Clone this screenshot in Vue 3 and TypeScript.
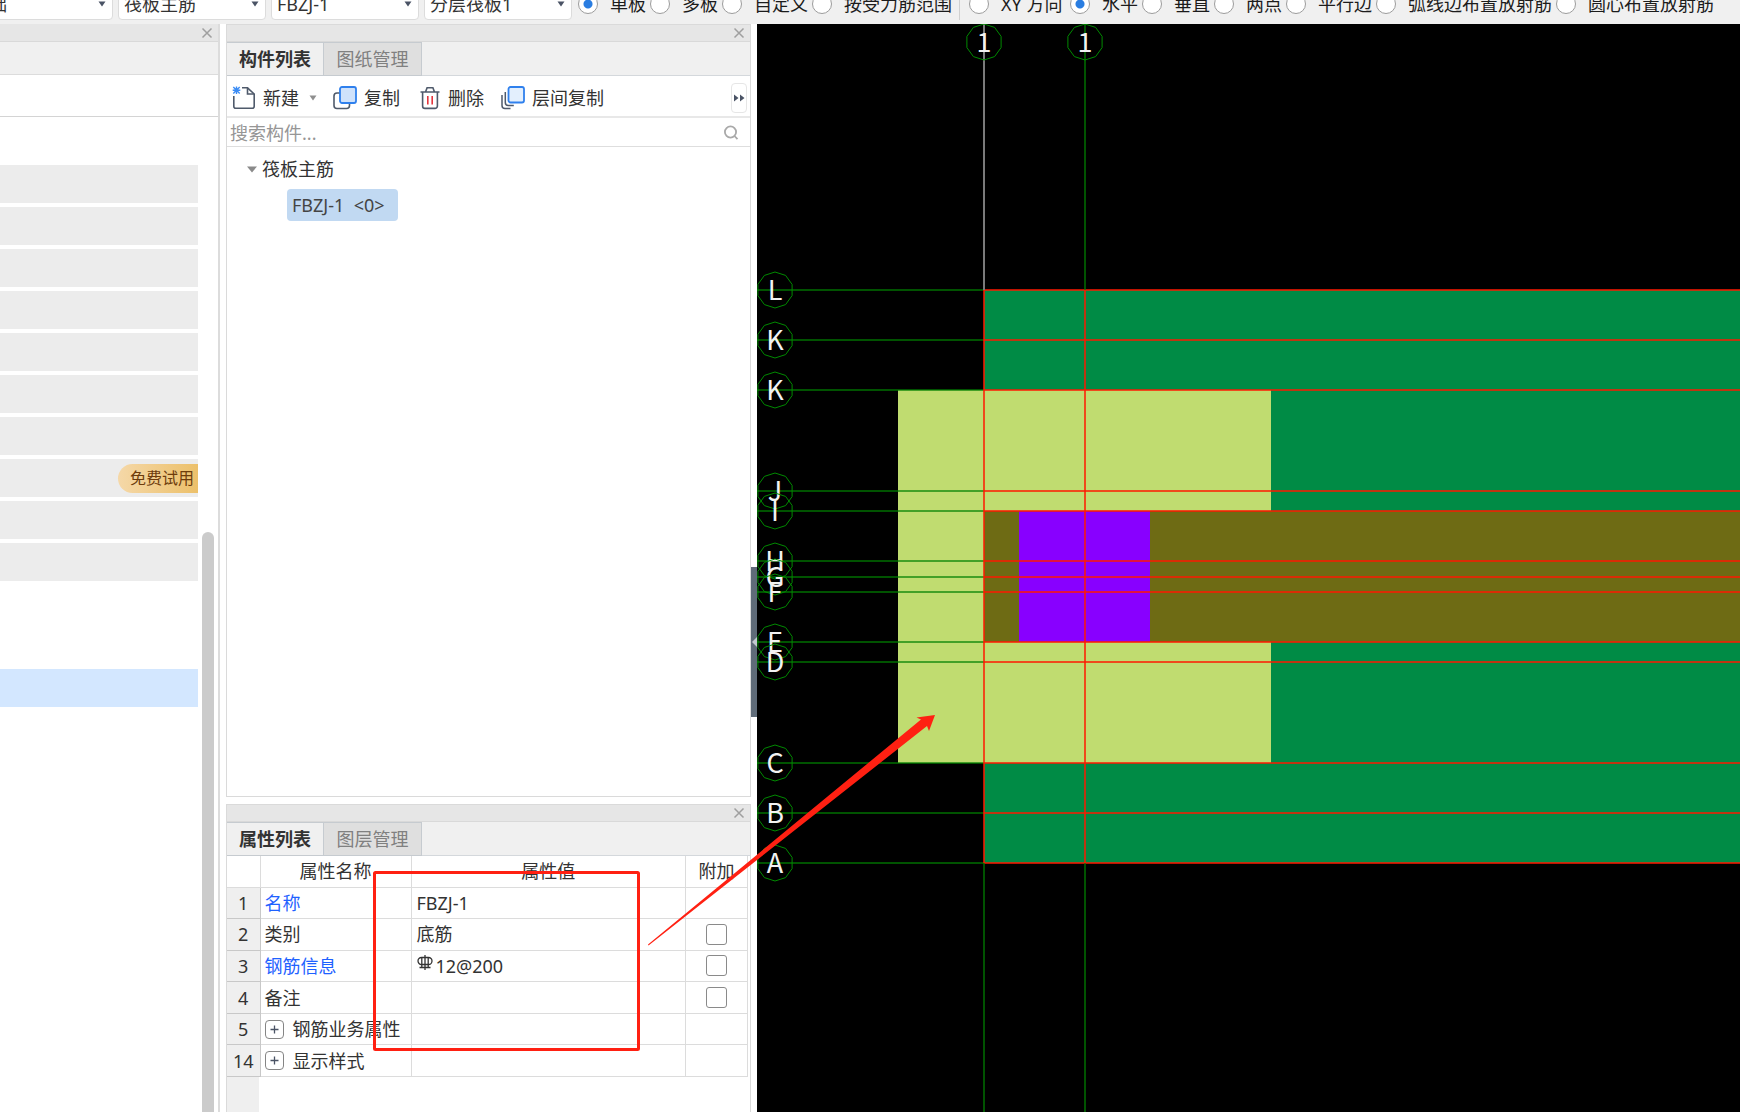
<script setup lang="ts">
import { ref } from 'vue'

interface Drop { id: string; label: string; value: string }
interface Choice { group: string; label: string }
interface Row { no: number; name: string; value?: string; key?: boolean; rebar?: boolean; check?: boolean; group?: boolean }
interface Axis { label: string; y: number }

const drops: Drop[] = [
  { id: 'floor', label: '楼层', value: '基础' },
  { id: 'kind', label: '构件类型', value: '筏板主筋' },
  { id: 'member', label: '构件', value: 'FBZJ-1' },
  { id: 'layer', label: '分层', value: '分层筏板1' },
]
const ranges: Choice[] = ['单板', '多板', '自定义', '按受力筋范围'].map(label => ({ group: 'range', label }))
const directions: Choice[] = ['XY 方向', '水平', '垂直', '两点', '平行边', '弧线边布置放射筋', '圆心布置放射筋'].map(label => ({ group: 'dir', label }))
const range = ref('单板')
const direction = ref('水平')
const keyword = ref('')

const navRows = ['item', 'item', 'item', 'item', 'item', 'item', 'item', 'trial', 'item', 'item', 'blank', 'blank', 'active']

const rows: Row[] = [
  { no: 1, name: '名称', value: 'FBZJ-1', key: true },
  { no: 2, name: '类别', value: '底筋', check: true },
  { no: 3, name: '钢筋信息', value: '12@200', key: true, rebar: true, check: true },
  { no: 4, name: '备注', check: true },
  { no: 5, name: '钢筋业务属性', group: true },
  { no: 14, name: '显示样式', group: true },
]

const axes: Axis[] = [
  { label: 'L', y: 266 }, { label: 'K', y: 316 }, { label: 'K', y: 366 },
  { label: 'J', y: 467 }, { label: 'I', y: 487 }, { label: 'H', y: 537 },
  { label: 'G', y: 553 }, { label: 'F', y: 568 }, { label: 'E', y: 618 },
  { label: 'D', y: 638 }, { label: 'C', y: 739 }, { label: 'B', y: 789 }, { label: 'A', y: 839 },
]
const columns = [{ x: 227, first: true }, { x: 328, first: false }]

function bubble(cx: number, cy: number): string {
  const pts: string[] = []
  for (let i = 0; i < 10; i++) {
    const a = (Math.PI * 2 * i) / 10 - Math.PI / 2
    pts.push(`${(cx + 18 * Math.cos(a)).toFixed(1)},${(cy + 18 * Math.sin(a)).toFixed(1)}`)
  }
  return pts.join(' ')
}
</script>

<template>
  <div class="app">
    <header class="options">
      <div v-for="d in drops" :key="d.id" class="drop">
        <select :aria-label="d.label"><option>{{ d.value }}</option></select>
        <svg class="drop-caret" width="8" height="6" viewBox="0 0 8 6"><path d="M0.5 0.5h7L4 5.5z" fill="#4a5365" /></svg>
      </div>
      <div class="choices">
        <label v-for="c in ranges" :key="c.label" class="choice">
          <input v-model="range" type="radio" :name="c.group" :value="c.label"><span>{{ c.label }}</span>
        </label>
      </div>
      <div class="choices second">
        <label v-for="c in directions" :key="c.label" class="choice">
          <input v-model="direction" type="radio" :name="c.group" :value="c.label"><span>{{ c.label }}</span>
        </label>
      </div>
    </header>

    <main class="work">
      <aside class="nav">
        <div class="titlebar">
          <button class="close" aria-label="关闭"><svg width="12" height="12" viewBox="0 0 12 12"><path d="M1.5 1.5l9 9M10.5 1.5l-9 9" /></svg></button>
        </div>
        <div class="nav-strip"></div>
        <div class="nav-head"></div>
        <div class="nav-body">
          <div class="nav-rows">
            <div v-for="(r, i) in navRows" :key="i" class="nav-row" :class="r">
              <a v-if="r === 'trial'" href="#" class="trial">免费试用</a>
            </div>
          </div>
          <div class="nav-thumb"></div>
        </div>
      </aside>

      <div class="docks">
        <section class="panel members">
          <div class="titlebar">
            <button class="close" aria-label="关闭"><svg width="12" height="12" viewBox="0 0 12 12"><path d="M1.5 1.5l9 9M10.5 1.5l-9 9" /></svg></button>
          </div>
          <div class="tabs">
            <button class="tab on">构件列表</button><button class="tab">图纸管理</button>
          </div>
          <div class="tools">
            <button class="tool new">
              <svg width="24" height="24" viewBox="0 0 24 24" fill="none">
                <path d="M1.8 10v10.2a2 2 0 0 0 2 2h16.4a2 2 0 0 0 2-2V8L15.5 1.8H10" stroke="#4f5a6b" stroke-width="1.6" />
                <path d="M15.5 1.8V8h6.7" stroke="#4f5a6b" stroke-width="1.6" />
                <path d="M4.5 0.5v7.6M0.7 4.3h7.6M1.3 1.1l6.4 6.4M7.7 1.1L1.3 7.5" stroke="#3b8cf5" stroke-width="1.4" />
              </svg>
              <span>新建</span>
              <svg class="more" width="8" height="6" viewBox="0 0 8 6"><path d="M0.5 0.5h7L4 5.5z" fill="#8f8f8f" /></svg>
            </button>
            <button class="tool copy">
              <svg width="24" height="24" viewBox="0 0 24 24" fill="none">
                <path d="M7 7H4a3 3 0 0 0-3 3v9.5a3 3 0 0 0 3 3h9.500a3 3 0 0 0 3-3V17" stroke="#4f5a6b" stroke-width="1.6" />
                <rect x="7" y="1" width="16" height="16" rx="2" fill="#cfe2fb" stroke="#2f80ed" stroke-width="1.8" />
              </svg>
              <span>复制</span>
            </button>
            <button class="tool del">
              <svg width="20" height="24" viewBox="0 0 20 24" fill="none">
                <path d="M0.500 6h19M5.500 6l1.600-4.200h5.800L14.500 6M2.600 6v14a2.400 2.400 0 0 0 2.400 2.400h10a2.400 2.400 0 0 0 2.400-2.400V6" stroke="#4f5a6b" stroke-width="1.6" />
                <path d="M7.800 10v8.500M12.200 10v8.500" stroke="#e5343d" stroke-width="1.6" />
              </svg>
              <span>删除</span>
            </button>
            <button class="tool layers">
              <svg width="24" height="24" viewBox="0 0 24 24" fill="none">
                <path d="M1 9v10.500a3 3 0 0 0 3 3h5.500M4.300 6v10.500a3 3 0 0 0 3 3h5.500" stroke="#4f5a6b" stroke-width="1.5" />
                <rect x="7.500" y="1" width="15.500" height="15.500" rx="2" fill="#e3effd" stroke="#2f80ed" stroke-width="1.8" />
              </svg>
              <span>层间复制</span>
            </button>
            <button class="overflow" aria-label="更多">
              <svg width="12" height="8" viewBox="0 0 12 8"><path d="M1 0.500l4.500 3.500L1 7.500zM7 0.500L11.500 4 7 7.500z" fill="#4a5365" /></svg>
            </button>
          </div>
          <div class="search">
            <input v-model="keyword" type="text" aria-label="搜索构件" placeholder="搜索构件...">
            <svg width="16" height="16" viewBox="0 0 16 16" fill="none" stroke="#a9a9a9" stroke-width="1.800"><circle cx="7.500" cy="7" r="5.600" /><path d="M11.500 11l3 3.200" /></svg>
          </div>
          <div class="tree">
            <div class="branch">
              <svg width="10" height="7" viewBox="0 0 10 7"><path d="M0 0.500h10L5 6.500z" fill="#8a8a8a" /></svg>
              <span>筏板主筋</span>
            </div>
            <button class="leaf">FBZJ-1&nbsp; &lt;0&gt;</button>
          </div>
        </section>

        <section class="panel props">
          <div class="titlebar">
            <button class="close" aria-label="关闭"><svg width="12" height="12" viewBox="0 0 12 12"><path d="M1.500 1.500l9 9M10.500 1.500l-9 9" /></svg></button>
          </div>
          <div class="tabs">
            <button class="tab on">属性列表</button><button class="tab">图层管理</button>
          </div>
          <div class="sheet">
            <table>
              <colgroup><col class="c-no"><col class="c-name"><col class="c-value"><col class="c-extra"></colgroup>
              <thead>
                <tr><th class="corner"></th><th>属性名称</th><th>属性值</th><th>附加</th></tr>
              </thead>
              <tbody>
                <tr v-for="r in rows" :key="r.no">
                  <th class="no" scope="row">{{ r.no }}</th>
                  <td :class="{ key: r.key }">
                    <span class="cell">
                      <button v-if="r.group" class="expand" :aria-label="'展开' + r.name">
                        <svg width="9" height="9" viewBox="0 0 9 9"><path d="M4.500 0.500v8M0.500 4.500h8" stroke="#4a5365" stroke-width="1.300" /></svg>
                      </button>{{ r.name }}
                    </span>
                  </td>
                  <td>
                    <span class="cell value">
                      <svg v-if="r.rebar" class="rebar" width="16" height="16" viewBox="0 0 16 16" fill="none" stroke="#333" stroke-width="1.300"><path d="M8 0v15M4.800 2.500v10M11.200 2.500v10M2.500 12.500h11" /><path d="M4.500 2.500h7a3.500 3.500 0 0 1 0 7h-7a3.500 3.500 0 0 1 0-7z" /></svg>{{ r.value }}
                    </span>
                  </td>
                  <td class="tick"><input v-if="r.check" type="checkbox" :aria-label="'附加' + r.name"></td>
                </tr>
              </tbody>
            </table>
          </div>
        </section>
      </div>

      <div class="splitter">
        <button class="grip" aria-label="折叠面板"><svg width="5" height="10" viewBox="0 0 5 10"><path d="M5 0v10L0 5z" fill="#c3c9d0" /></svg></button>
      </div>

      <div class="canvas">
        <svg class="drawing" width="100%" height="100%">
          <rect x="227" y="266" width="100%" height="573" fill="#008b45" />
          <rect x="141" y="366" width="373" height="373" fill="#c0dc70" />
          <rect x="227" y="487" width="100%" height="131" fill="#6e6b14" />
          <rect x="262" y="487" width="131" height="131" fill="#8800ff" />
          <g v-for="(a, i) in axes" :key="'h' + i">
            <line x1="0" :y1="a.y" x2="227" :y2="a.y" class="axis" />
            <line x1="227" :y1="a.y" x2="100%" :y2="a.y" class="edge" />
          </g>
          <g v-for="c in columns" :key="'v' + c.x">
            <line :x1="c.x" y1="0" :x2="c.x" y2="266" :class="c.first ? 'picked' : 'axis'" />
            <line :x1="c.x" y1="266" :x2="c.x" y2="839" class="edge" />
            <line :x1="c.x" y1="839" :x2="c.x" y2="100%" class="axis" />
          </g>
          <g v-for="(a, i) in axes" :key="'b' + i">
            <polygon :points="bubble(18, a.y)" class="ring" />
            <text x="18" :y="a.y + 10" class="mark">{{ a.label }}</text>
          </g>
          <g v-for="c in columns" :key="'c' + c.x">
            <polygon :points="bubble(c.x, 18)" class="ring" />
            <text :x="c.x" y="28" class="mark">1</text>
          </g>
        </svg>
      </div>
    </main>

    <svg class="notes" width="100%" height="100%">
      <rect x="374.500" y="872.500" width="264" height="177" rx="1" fill="none" stroke="#ff2012" stroke-width="3" />
      <path d="M648 944.500L921 719.500L916.500 717.500L935 715L929 731L927 726L648.500 945.500z" fill="#ff2012" />
    </svg>
  </div>
</template>

<style>
body { margin: 0; background: #fff; }
</style>

<style scoped>
.app {
  position: relative;
  display: flex;
  flex-direction: column;
  min-height: 100vh;
  overflow: hidden;
  background: #fff;
  color: #333;
  font: 18px/24px "Noto Sans", "Noto Sans CJK SC", sans-serif;
}
.app * { box-sizing: border-box; }
button, input, select { font: inherit; color: inherit; margin: 0; }
button { padding: 0; border: 0; background: none; white-space: nowrap; }
svg { display: block; flex: none; }

.options {
  display: flex;
  align-items: flex-end;
  gap: 5px;
  height: 24px;
  padding-bottom: 4px;
  margin-left: -35px;
  background: #f0f0f0;
  overflow: hidden;
}
.drop { position: relative; flex: none; width: 148px; }
.drop select {
  display: block;
  appearance: none;
  width: 100%;
  height: 32px;
  padding: 0 24px 0 5px;
  border: 1px solid #dcdcdc;
  border-radius: 4px;
  background: #fff;
}
.drop-caret { position: absolute; right: 7px; top: 13px; }
.choices { display: flex; flex: none; gap: 4px; height: 32px; padding-left: 1px; color: #1c1c1c; }
.second { margin-left: 2px; padding-left: 9px; border-left: 1px solid #d0d0d0; }
.choice { display: flex; align-items: center; gap: 12px; white-space: nowrap; }
.second .choice:first-child { min-width: 97px; }
.choice input {
  appearance: none;
  width: 20px;
  height: 20px;
  border: 1px solid #9c9c9c;
  border-radius: 50%;
  background: #fff;
}
.choice input:checked { background: radial-gradient(circle, #2a7de1 4px, #fff 5px); }

.work { display: flex; flex: 1; }
.titlebar {
  display: flex;
  align-items: center;
  justify-content: flex-end;
  height: 18px;
  padding-right: 5px;
  background: #e6e6e6;
  border-bottom: 1px solid #d9d9d9;
}
.close { display: block; }
.close svg { stroke: #9f9f9f; stroke-width: 1.5; }

.nav { display: flex; flex-direction: column; flex: none; width: 220px; border-right: 2px solid #dcdcdc; }
.nav-strip { height: 33px; background: #f0f0f0; border-bottom: 1px solid #dcdcdc; }
.nav-head { height: 42px; border-bottom: 1px solid #d4d4d4; }
.nav-body { display: flex; flex: 1; gap: 4px; }
.nav-rows { display: flex; flex-direction: column; gap: 4px; width: 198px; padding-top: 48px; }
.nav-row { display: flex; align-items: center; justify-content: flex-end; height: 38px; overflow: hidden; }
.item, .trial { background: #ececec; }
.active { background: #d3e7ff; }
a.trial {
  width: 80px;
  height: 29px;
  padding-left: 12px;
  border-radius: 15px 0 0 15px;
  background: linear-gradient(90deg, #f5d8a8, #ecc06a);
  color: #6d3c0c;
  font-size: 16px;
  line-height: 29px;
  text-decoration: none;
  white-space: nowrap;
}
.nav-thumb { width: 12px; margin-top: 415px; border-radius: 6px 6px 0 0; background: #cbcbcb; }

.docks { display: flex; flex-direction: column; flex: none; gap: 7px; width: 525px; margin-left: 6px; }
.panel { border: 1px solid #dadada; border-top: 0; }
.members { display: flex; flex-direction: column; flex: 1; }
.tabs { display: flex; height: 34px; background: #f0f0f0; border-bottom: 1px solid #d4d8dc; }
.tab { width: 98px; height: 34px; border: 1px solid #c6cbd0; border-left-width: 0; background: #dfdfdf; color: #808080; }
.tab.on { width: 97px; background: #f0f0f0; color: #333; font-weight: 700; }

.tools { display: flex; align-items: center; height: 42px; padding: 3px 3px 0 5px; border-bottom: 2px solid #e8e8e8; }
.tool { display: flex; align-items: center; gap: 7px; }
.more { margin-left: 3px; }
.copy { margin-left: 16px; }
.del { margin-left: 20px; gap: 8px; }
.layers { margin-left: 17px; }
.overflow {
  display: flex;
  align-items: center;
  justify-content: center;
  width: 16px;
  height: 30px;
  margin-left: auto;
  border: 1px solid #e6e6e6;
  border-radius: 4px;
}
.search { display: flex; align-items: center; height: 29px; padding: 1px 11px 0 3px; border-bottom: 1px solid #dedede; }
.search input { flex: 1; min-width: 0; height: 26px; padding: 0; border: 0; outline: 0; background: none; }
.search input::placeholder { color: #969696; opacity: 1; }
.tree { display: flex; flex-direction: column; align-items: flex-start; gap: 8px; padding: 10px 0 0 20px; }
.branch { display: flex; align-items: center; gap: 5px; }
.leaf { min-width: 111px; height: 32px; margin-left: 40px; padding: 0 5px; border-radius: 4px; background: #c1d9f2; color: #444; text-align: left; }

.props { flex: none; border-bottom: 0; }
.props .titlebar, .members .titlebar { border-top: 1px solid #dadada; }
.sheet { min-height: 256px; padding-right: 2px; background: linear-gradient(90deg, #efefef 32px, #fff 32px); }
table { width: 100%; height: 221px; table-layout: fixed; border-collapse: collapse; background: #fff; }
.c-no { width: 33px; }
.c-name { width: 151px; }
.c-extra { width: 62px; }
th, td { height: 31px; padding: 0; border-right: 1px solid #dcdcdc; border-bottom: 1px solid #dcdcdc; font-weight: 400; }
.corner { background: #fff; }
.no { background: #efefef; border-color: #c8c8c8; }
.key { color: #1f62ff; }
.cell { display: flex; align-items: center; padding-left: 4px; white-space: nowrap; }
.value { padding-left: 5px; }
.expand {
  display: flex;
  align-items: center;
  justify-content: center;
  width: 19px;
  height: 19px;
  margin-right: 9px;
  border: 1px solid #858585;
  border-radius: 4px;
}
.rebar { margin-right: 3px; margin-bottom: 5px; }
.tick input {
  appearance: none;
  display: block;
  width: 21px;
  height: 21px;
  margin: 0 auto;
  border: 1px solid #8a8a8a;
  border-radius: 3px;
  background: #fff;
}

.splitter { flex: none; width: 6px; padding-top: 543px; }
.grip { display: flex; align-items: center; justify-content: flex-end; width: 6px; height: 150px; background: #5f6b78; }

.canvas { position: relative; flex: 1; min-width: 0; background: #000; }
.drawing { position: absolute; inset: 0; }
.axis { stroke: #008000; stroke-opacity: 0.65; stroke-width: 2; }
.edge { stroke: #ff1800; stroke-opacity: 0.75; stroke-width: 2; }
.picked { stroke: #7a7a7a; stroke-width: 2; }
.ring { fill: none; stroke: #008a00; stroke-width: 1; }
.mark { fill: #f2f2f2; font: 27px "Noto Sans CJK SC", sans-serif; text-anchor: middle; }

.notes { position: absolute; inset: 0; pointer-events: none; }
</style>
